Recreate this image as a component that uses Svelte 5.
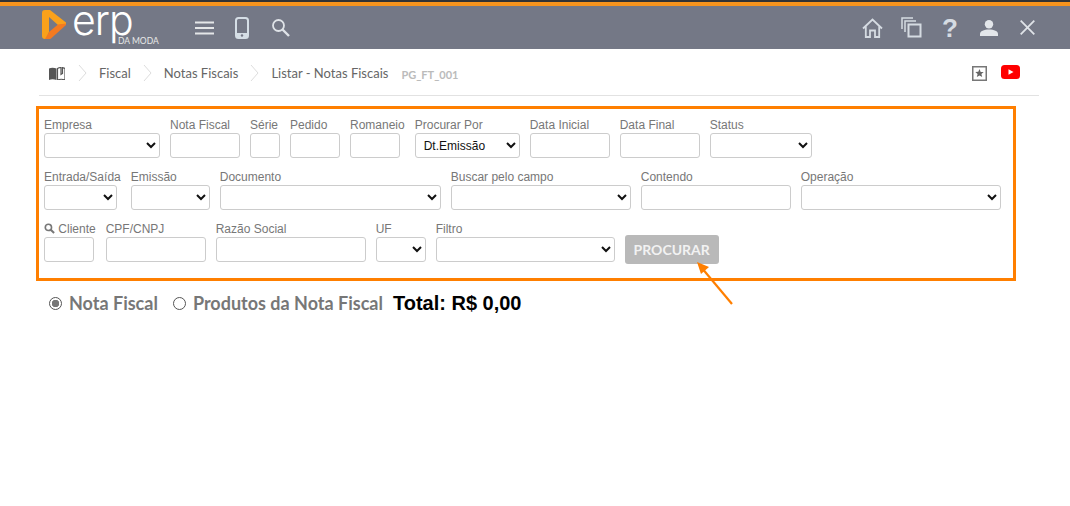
<script>
	const rowOne = [
		{ label: 'Empresa', width: 116, type: 'select' },
		{ label: 'Nota Fiscal', width: 70 },
		{ label: 'Série', width: 30 },
		{ label: 'Pedido', width: 50 },
		{ label: 'Romaneio', width: 50 },
		{ label: 'Procurar Por', width: 105, type: 'select', value: 'Dt.Emissão' },
		{ label: 'Data Inicial', width: 80 },
		{ label: 'Data Final', width: 80 },
		{ label: 'Status', width: 102, type: 'select' }
	];
	const rowTwo = [
		{ label: 'Entrada/Saída', width: 73, type: 'select' },
		{ label: 'Emissão', width: 79, type: 'select' },
		{ label: 'Documento', width: 221, type: 'select' },
		{ label: 'Buscar pelo campo', width: 180, type: 'select' },
		{ label: 'Contendo', width: 150 },
		{ label: 'Operação', width: 200, type: 'select' }
	];
	const rowThree = [
		{ label: 'Cliente', width: 50, lookup: true },
		{ label: 'CPF/CNPJ', width: 100 },
		{ label: 'Razão Social', width: 150 },
		{ label: 'UF', width: 50, type: 'select' },
		{ label: 'Filtro', width: 179, type: 'select' }
	];
	const crumbs = ['Fiscal', 'Notas Fiscais', 'Listar - Notas Fiscais'];
</script>

{#snippet field(f)}
	<div class="field">
		<span class="label">
			{#if f.lookup}
				<svg class="lookup" viewBox="0 0 12 12" width="11" height="11"><circle cx="4.8" cy="4.8" r="3.4" fill="none" stroke="#777" stroke-width="1.8"/><path d="M7.4 7.4 11 11" stroke="#777" stroke-width="2.2"/></svg>
			{/if}
			{f.label}
		</span>
		{#if f.type === 'select'}
			<select style="width: {f.width}px">
				{#if f.value}<option>{f.value}</option>{:else}<option></option>{/if}
			</select>
		{:else}
			<input type="text" style="width: {f.width}px" />
		{/if}
	</div>
{/snippet}

<header class="topbar">
	<div class="brand">
		<svg class="mark" viewBox="0 0 24 29" width="24" height="29">
			<path d="M3 0h5l16 12.500v2L16 15 7 7v15l-3 7H3q-3 0-3-3V3q0-3 3-3z" fill="#f9a11b"/>
			<path d="M24 13.500v1.500L9 28.500q-1 .5-2 .5H3l4-7 9-7.500z" fill="#f37a20"/>
		</svg>
		<span class="erp">erp</span>
		<span class="moda">DA MODA</span>
	</div>
	<div class="tools">
		<svg viewBox="0 0 19 14" width="19" height="14"><path d="M0 1.500h19M0 7h19M0 12.500h19" stroke="#e4e6e8" stroke-width="2"/></svg>
		<svg viewBox="0 0 14 22" width="14" height="22"><rect x="1" y="1" width="12" height="20" rx="2.500" fill="#747886" stroke="#d5dee6" stroke-width="2"/><rect x="1" y="16" width="12" height="5" fill="#d5dee6"/><circle cx="7" cy="18.500" r="1.200" fill="#747886"/></svg>
		<svg class="find" viewBox="0 0 19 19" width="19" height="19"><circle cx="7.500" cy="7.500" r="5.500" fill="none" stroke="#dfe3e8" stroke-width="1.800"/><path d="M11.500 11.500 18 18" stroke="#dfe3e8" stroke-width="2.400"/></svg>
	</div>
	<div class="actions">
		<svg class="home" viewBox="0 0 21 20" width="21" height="20"><path d="M1 10.500 10.500 1.500l9.500 9M3.800 8.500V19H8v-6.500h5V19h4.200V8.500" fill="none" stroke="#d5dbe2" stroke-width="1.800"/></svg>
		<svg class="copies" viewBox="0 0 21 21" width="21" height="21"><path d="M1 12V1h11M4 15V4h11" fill="none" stroke="#d5dbe2" stroke-width="1.500"/><rect x="7.500" y="7.500" width="12" height="12" fill="none" stroke="#d5dbe2" stroke-width="2"/></svg>
		<span class="help">?</span>
		<svg viewBox="0 0 18 16" width="18" height="16"><circle cx="9" cy="4.200" r="4.200" fill="#e3e6ea"/><path d="M0 16v-2c0-3 4-4.500 9-4.500s9 1.500 9 4.500v2z" fill="#e3e6ea"/></svg>
		<svg viewBox="0 0 15 15" width="15" height="15"><path d="M.7.700l13.600 13.600M14.300.700.700 14.300" stroke="#dfe3e8" stroke-width="1.800"/></svg>
	</div>
</header>

<nav class="crumbs">
	<svg class="book" viewBox="0 0 16 13" width="16" height="13"><path d="M0 1.500C2 .5 5 .5 7.500 1.500V13C5 12 2 12 0 13z" fill="#555"/><path d="M8.500 1.500C10 .8 11 .6 12 .5v7l1.500-1V.6l2.500.9V13c-2.500-1-5-1-7.500 0z" fill="none" stroke="#555" stroke-width="1.200"/></svg>
	{#each crumbs as crumb}
		<svg class="sep" viewBox="0 0 9 18" width="9" height="18"><path d="M1 1l7 8-7 8" fill="none" stroke="#ddd" stroke-width="1"/></svg>
		<span class="crumb">{crumb}</span>
	{/each}
	<span class="code">PG_FT_001</span>
	<div class="links">
		<svg viewBox="0 0 15 15" width="15" height="15"><rect x=".75" y=".75" width="13.500" height="13.500" fill="#fff" stroke="#777" stroke-width="1.500"/><path d="M7.500 3l1.200 2.900 3 .2-2.300 2 .8 3-2.700-1.700L4.800 11l.8-3-2.300-2 3-.2z" fill="#666"/></svg>
		<svg class="tube" viewBox="0 0 19 14" width="19" height="14"><rect width="19" height="14" rx="3.500" fill="#f00"/><path d="M7.500 4.200v5.600l5-2.800z" fill="#fff"/></svg>
	</div>
</nav>

<form class="filters">
	<div class="row">
		{#each rowOne as f}{@render field(f)}{/each}
	</div>
	<div class="row">
		{#each rowTwo as f}{@render field(f)}{/each}
	</div>
	<div class="row">
		{#each rowThree as f}{@render field(f)}{/each}
		<button type="button">PROCURAR</button>
	</div>
</form>

<div class="summary">
	<label class="choice"><span class="radio on"></span>Nota Fiscal</label>
	<label class="choice"><span class="radio"></span>Produtos da Nota Fiscal</label>
	<strong class="total">Total: R$ 0,00</strong>
</div>

<!-- seta de destaque sobre o botão -->
<svg class="arrow" viewBox="0 0 50 60" width="50" height="60">
	<path d="M35 42 4 5" stroke="#ff7f00" stroke-width="2.200"/>
	<path d="M0 0 12 5 4 12z" fill="#ff7f00"/>
</svg>

<style>
	:global(body) {
		margin: 0;
		background: #fff;
		overflow: hidden;
	}
	.topbar {
		height: 43px;
		background: #747886;
		border-top: 2px solid #333;
		box-shadow: inset 0 4px 0 #f7941d;
		padding-top: 4px;
		display: flex;
		align-items: center;
		box-sizing: content-box;
	}
	.brand {
		position: relative;
		width: 141px;
		margin-left: 42px;
		height: 43px;
		display: flex;
		align-items: flex-start;
		gap: 6px;
	}
	.mark {
		margin-top: 4px;
	}
	.erp {
		font: 300 41px/28px Inter, sans-serif;
		letter-spacing: -1px;
		color: #fff;
		margin-top: 0;
	}
	.moda {
		position: absolute;
		left: 76px;
		top: 30px;
		font: 8.500px/11px Lato, sans-serif;
		color: #e8e8e8;
	}
	.tools {
		display: flex;
		align-items: center;
		gap: 21px;
		margin-left: 12px;
	}
	.find {
		margin-left: 1px;
	}
	.actions {
		margin-left: auto;
		margin-right: 35px;
		display: flex;
		align-items: center;
		gap: 22px;
	}
	.home {
		margin-right: -4px;
	}
	.copies {
		margin-right: -2px;
	}
	.help {
		font: bold 26px/26px "Liberation Sans", sans-serif;
		color: #d5dbe2;
	}
	.crumbs {
		margin: 0 31px 0 39px;
		height: 44px;
		padding-top: 2px;
		border-bottom: 1px solid #e2e2e2;
		display: flex;
		align-items: center;
		font: 13px Lato, sans-serif;
		color: #666;
	}
	.book {
		margin: 0 13px 0 10px;
	}
	.sep {
		margin-right: 12px;
	}
	.crumb {
		margin-right: 12px;
	}
	.code {
		margin: 2px 0 0 1px;
		font-size: 11px;
		font-weight: 700;
		color: #bbb;
	}
	.links {
		margin-left: auto;
		display: flex;
		align-items: center;
		gap: 14px;
		margin-right: 19px;
	}
	.tube {
		margin-top: -2px;
	}
	.filters {
		box-sizing: border-box;
		width: 980px;
		height: 175px;
		margin: 10px 0 0 36px;
		border: 3px solid #ff7f00;
		padding: 9px 5px 0;
		display: flex;
		flex-direction: column;
		gap: 12px;
	}
	.row {
		display: flex;
		gap: 10px;
		align-items: flex-start;
		height: 40px;
	}
	.field {
		display: flex;
		flex-direction: column;
		align-items: flex-start;
	}
	.label {
		font: 12px/15px "Liberation Sans", Arial, sans-serif;
		color: #777;
		white-space: nowrap;
		height: 15px;
	}
	.lookup {
		vertical-align: -1px;
	}
	input, select {
		box-sizing: border-box;
		height: 25px;
		border: 1px solid #ccc;
		border-radius: 3px;
		background: #fff;
		font: 12px "Liberation Sans", Arial, sans-serif;
		color: #111;
		margin: 0;
	}
	select {
		padding-left: 4px;
	}
	button {
		width: 94px;
		height: 29px;
		margin-top: 13px;
		border: 0;
		border-radius: 3px;
		background: #b9b9b9;
		color: #f2f2f2;
		font: 700 14px Lato, sans-serif;
		padding: 0;
	}
	.summary {
		display: flex;
		align-items: center;
		height: 44px;
		margin-left: 49px;
	}
	.choice {
		display: flex;
		align-items: center;
		font: 700 18px Lato, sans-serif;
		color: #777;
		margin-right: 15px;
	}
	.radio {
		box-sizing: border-box;
		width: 13px;
		height: 13px;
		border: 1px solid #555;
		border-radius: 50%;
		margin-right: 7px;
		background: #fff;
	}
	.radio.on {
		background: radial-gradient(circle, #777 0 3.500px, #fff 4px);
	}
	.total {
		font: 700 20px "Liberation Sans", Arial, sans-serif;
		color: #000;
		margin-left: -5px;
	}
	.arrow {
		position: absolute;
		left: 697px;
		top: 262px;
	}
</style>
